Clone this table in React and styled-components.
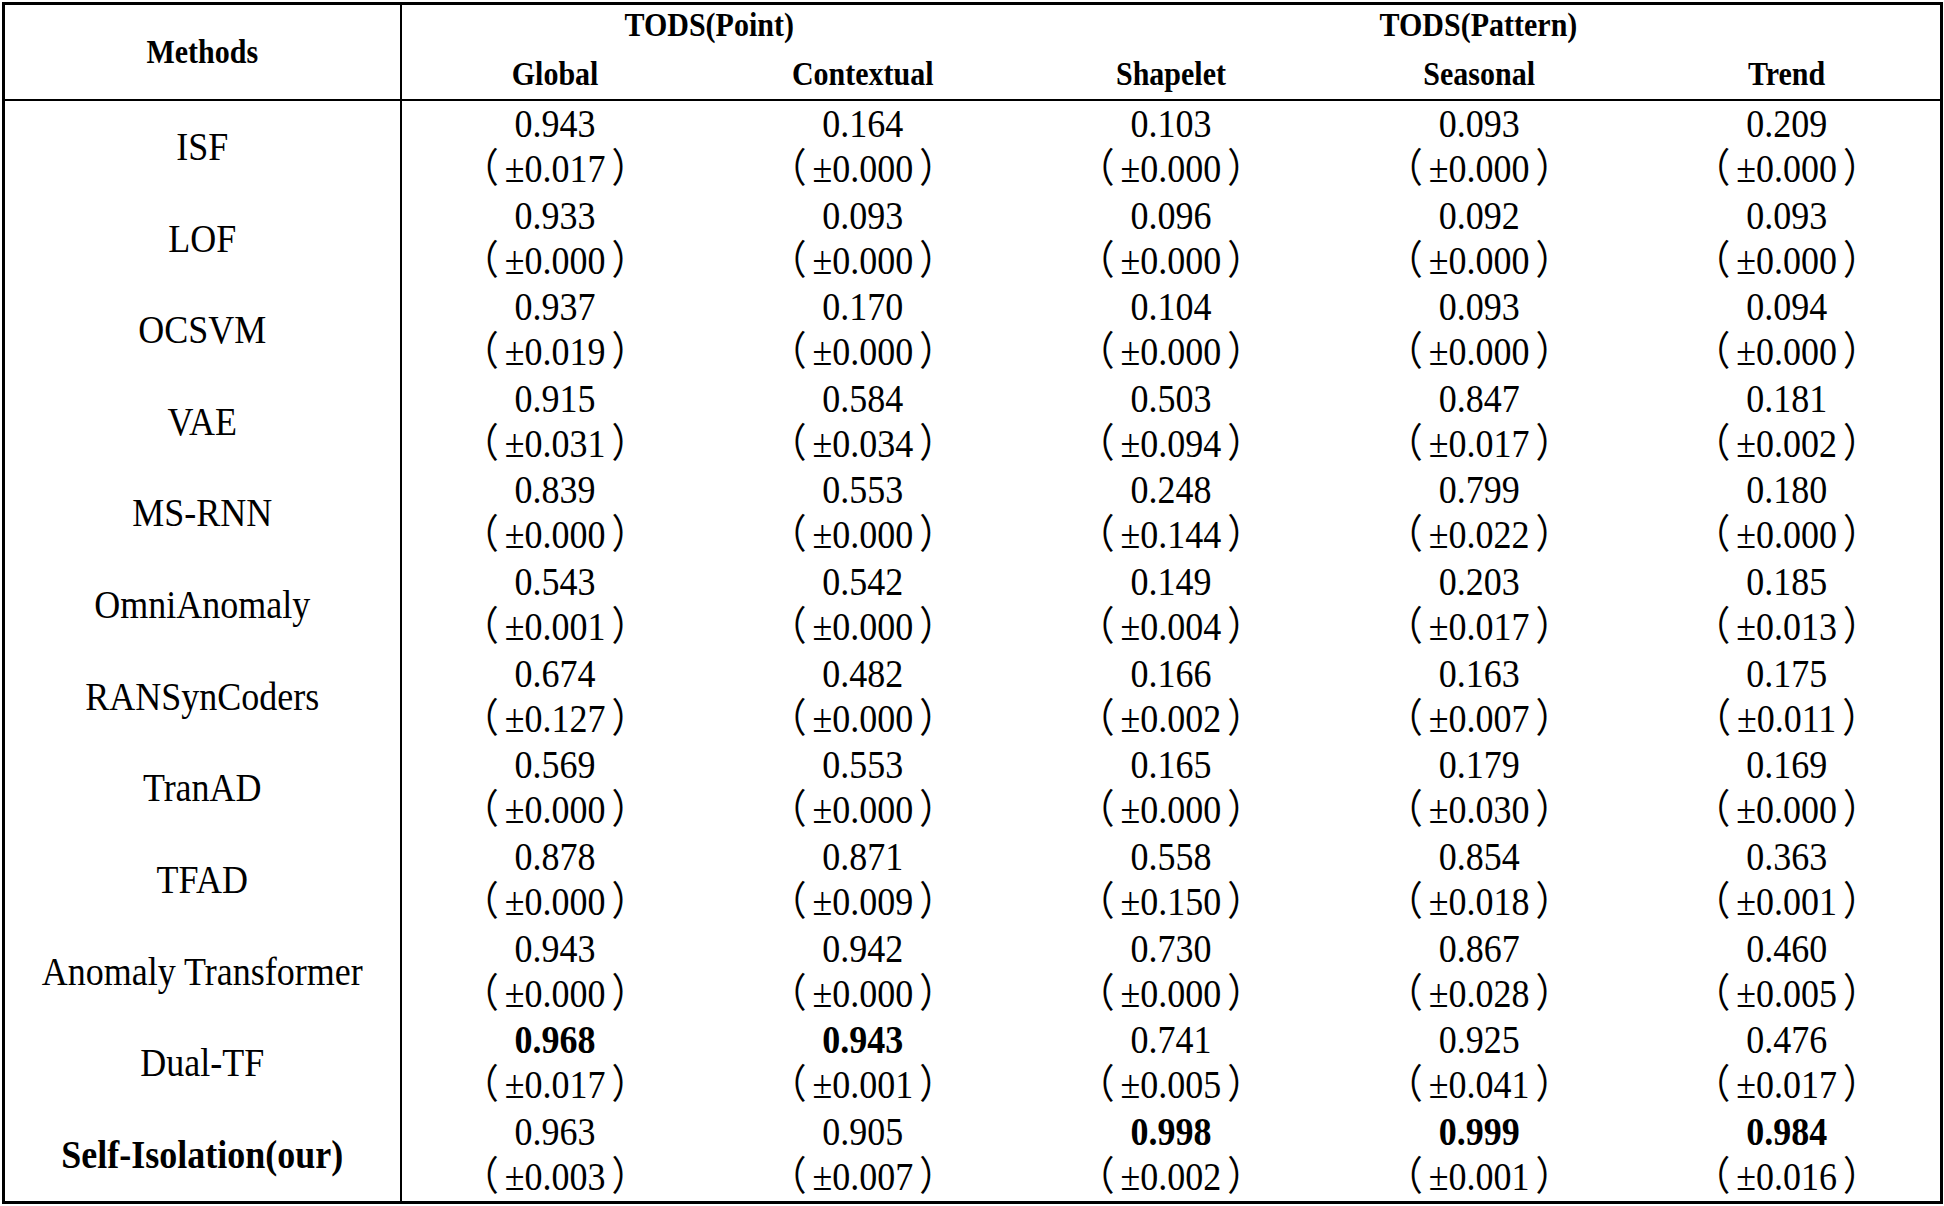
import React from 'react'
import styled, { createGlobalStyle } from 'styled-components'

const GlobalStyle = createGlobalStyle`
  html, body {
    margin: 0;
    padding: 0;
    background: #fff;
  }
  body {
    padding: 2px 0 0 2px;
    font-family: "Liberation Serif", "Noto Sans CJK SC", serif;
    color: #000;
  }
`

const Table = styled.table`
  width: 1941px;
  height: 1202px;
  border-collapse: collapse;
  table-layout: fixed;
  border: 3px solid #000;
`

const HeadCell = styled.th`
  font-size: 30px;
  font-weight: 700;
  height: 47px;
  padding: 0;
  text-align: center;
  vertical-align: ${({ span }) => (span ? 'middle' : 'top')};
  line-height: ${({ group }) => (group ? '40px' : '44px')};
  border-bottom: ${({ last }) => (last ? '2px solid #000' : 'none')};
  border-right: ${({ divider }) => (divider ? '2px solid #000' : 'none')};
`

const Tall = styled.span`
  display: inline-block;
  transform: scaleY(1.12);
`

const MethodCell = styled.td`
  font-size: 36px;
  font-weight: ${({ bold }) => (bold ? 700 : 400)};
  text-align: center;
  vertical-align: middle;
  padding: 0;
  border-right: 2px solid #000;
  white-space: nowrap;
`

const ValueCell = styled.td`
  font-size: 36px;
  text-align: center;
  vertical-align: middle;
  padding: 0;
  line-height: 45px;
  white-space: nowrap;
`

const Line = styled.div`
  font-weight: ${({ bold }) => (bold ? 700 : 400)};
  transform: scaleY(1.12);
`

const Paren = styled.span`
  margin: ${({ close }) => (close ? '0 0 0 6px' : '0 6px 0 0')};
`

const columns = ['Global', 'Contextual', 'Shapelet', 'Seasonal', 'Trend']

const rows = [
  { name: 'ISF', vals: [['0.943', '0.017'], ['0.164', '0.000'], ['0.103', '0.000'], ['0.093', '0.000'], ['0.209', '0.000']] },
  { name: 'LOF', vals: [['0.933', '0.000'], ['0.093', '0.000'], ['0.096', '0.000'], ['0.092', '0.000'], ['0.093', '0.000']] },
  { name: 'OCSVM', vals: [['0.937', '0.019'], ['0.170', '0.000'], ['0.104', '0.000'], ['0.093', '0.000'], ['0.094', '0.000']] },
  { name: 'VAE', vals: [['0.915', '0.031'], ['0.584', '0.034'], ['0.503', '0.094'], ['0.847', '0.017'], ['0.181', '0.002']] },
  { name: 'MS-RNN', vals: [['0.839', '0.000'], ['0.553', '0.000'], ['0.248', '0.144'], ['0.799', '0.022'], ['0.180', '0.000']] },
  { name: 'OmniAnomaly', vals: [['0.543', '0.001'], ['0.542', '0.000'], ['0.149', '0.004'], ['0.203', '0.017'], ['0.185', '0.013']] },
  { name: 'RANSynCoders', vals: [['0.674', '0.127'], ['0.482', '0.000'], ['0.166', '0.002'], ['0.163', '0.007'], ['0.175', '0.011']] },
  { name: 'TranAD', vals: [['0.569', '0.000'], ['0.553', '0.000'], ['0.165', '0.000'], ['0.179', '0.030'], ['0.169', '0.000']] },
  { name: 'TFAD', vals: [['0.878', '0.000'], ['0.871', '0.009'], ['0.558', '0.150'], ['0.854', '0.018'], ['0.363', '0.001']] },
  { name: 'Anomaly Transformer', vals: [['0.943', '0.000'], ['0.942', '0.000'], ['0.730', '0.000'], ['0.867', '0.028'], ['0.460', '0.005']] },
  { name: 'Dual-TF', vals: [['0.968', '0.017', true], ['0.943', '0.001', true], ['0.741', '0.005'], ['0.925', '0.041'], ['0.476', '0.017']] },
  { name: 'Self-Isolation(our)', bold: true, vals: [['0.963', '0.003'], ['0.905', '0.007'], ['0.998', '0.002', true], ['0.999', '0.001', true], ['0.984', '0.016', true]] },
]

export default function App () {
  return (
    <>
      <GlobalStyle />
      <Table>
        <colgroup>
          <col style={{ width: 397 }} />
          {columns.map(c => <col key={c} />)}
        </colgroup>
        <thead>
          <tr>
            <HeadCell rowSpan={2} span divider last><Tall>Methods</Tall></HeadCell>
            <HeadCell group colSpan={2}><Tall>TODS(Point)</Tall></HeadCell>
            <HeadCell group colSpan={3}><Tall>TODS(Pattern)</Tall></HeadCell>
          </tr>
          <tr>
            {columns.map(c => <HeadCell key={c} last><Tall>{c}</Tall></HeadCell>)}
          </tr>
        </thead>
        <tbody>
          {rows.map(row => (
            <tr key={row.name}>
              <MethodCell bold={row.bold}><Tall>{row.name}</Tall></MethodCell>
              {row.vals.map(([score, spread, bold], i) => (
                <ValueCell key={columns[i]}>
                  <Line bold={bold}>{score}</Line>
                  <Line><Paren>（</Paren>±{spread}<Paren close>）</Paren></Line>
                </ValueCell>
              ))}
            </tr>
          ))}
        </tbody>
      </Table>
    </>
  )
}
